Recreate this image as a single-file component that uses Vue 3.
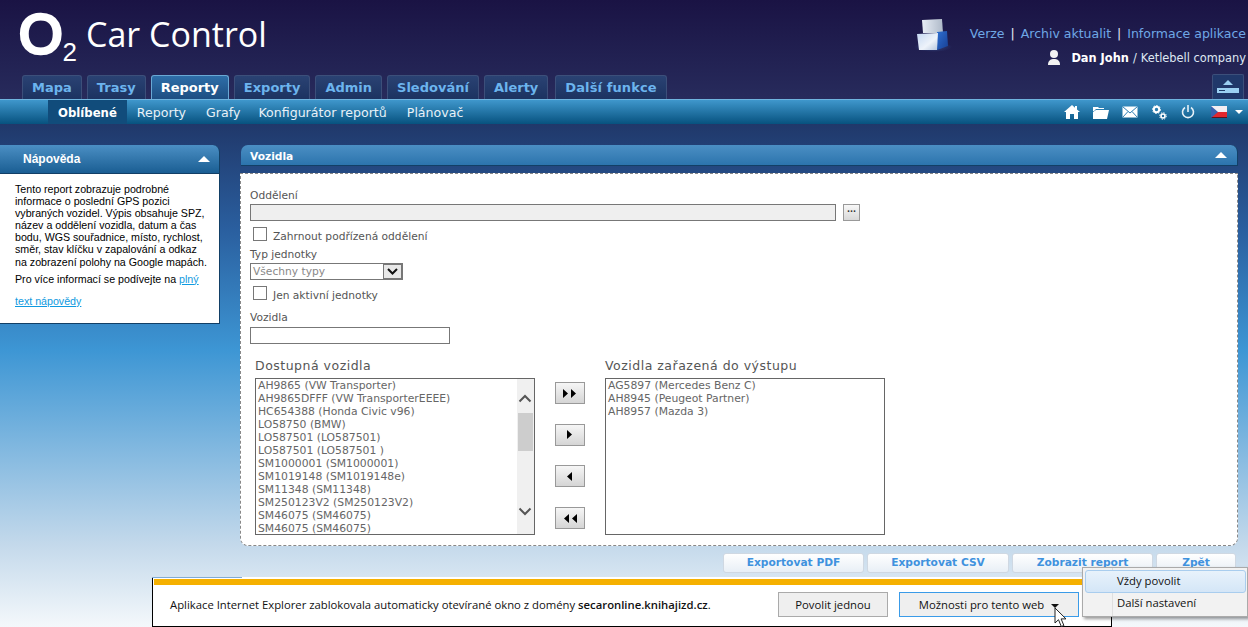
<script setup>
const tabs = ['Mapa', 'Trasy', 'Reporty', 'Exporty', 'Admin', 'Sledování', 'Alerty', 'Další funkce']
const subs = ['Oblíbené', 'Reporty', 'Grafy', 'Konfigurátor reportů', 'Plánovač']
const avail = ['AH9865 (VW Transporter)', 'AH9865DFFF (VW TransporterEEEE)', 'HC654388 (Honda Civic v96)', 'LO58750 (BMW)', 'LO587501 (LO587501)', 'LO587501 (LO587501 )', 'SM1000001 (SM1000001)', 'SM1019148 (SM1019148e)', 'SM11348 (SM11348)', 'SM250123V2 (SM250123V2)', 'SM46075 (SM46075)', 'SM46075 (SM46075)']
const chosen = ['AG5897 (Mercedes Benz C)', 'AH8945 (Peugeot Partner)', 'AH8957 (Mazda 3)']
const exportsList = ['Exportovat PDF', 'Exportovat CSV', 'Zobrazit report', 'Zpět']
</script>

<template>
  <div class="page">
    <div class="topline"></div>
    <header class="head">
      <div class="brand">
        <span class="o">O</span><span class="two">2</span>
        <span class="title">Car Control</span>
      </div>
      <div class="headright">
        <svg class="cubes" width="38" height="38" viewBox="0 0 38 38">
          <defs>
            <linearGradient id="cubeA" x1="0" x2="1" y1="0" y2="0"><stop offset="0" stop-color="#e8eef6"/><stop offset="1" stop-color="#aeb9c8"/></linearGradient>
            <linearGradient id="cubeB" x1="0" x2="1" y1="0" y2="1"><stop offset="0" stop-color="#c4d8f2"/><stop offset=".6" stop-color="#eef3fa"/><stop offset="1" stop-color="#b5c6dd"/></linearGradient>
            <linearGradient id="cubeC" x1="0" x2="1" y1="0" y2="1"><stop offset="0" stop-color="#2f6fd0"/><stop offset="1" stop-color="#173f94"/></linearGradient>
            <radialGradient id="cubeS"><stop offset="0" stop-color="#3a5a9a" stop-opacity=".7"/><stop offset="1" stop-color="#3a5a9a" stop-opacity="0"/></radialGradient>
          </defs>
          <ellipse cx="18" cy="30" rx="19" ry="5" fill="url(#cubeS)"/>
          <path d="M7 3l20-1 1 14H8z" fill="url(#cubeA)"/>
          <path d="M22 15l10-1 1 15-11 4z" fill="url(#cubeC)"/>
          <path d="M2 17l21-1-1 17-18 0z" fill="url(#cubeB)"/>
        </svg>
        <div class="links">
          <a>Verze</a><i>|</i><a>Archiv aktualit</a><i>|</i><a>Informace aplikace</a>
        </div>
        <div class="user">
          <svg width="16" height="18" viewBox="0 0 16 18"><circle cx="8" cy="5" r="4" fill="#f2f2f2"/><path d="M2 16c0-5 3-6 6-6s6 1 6 6z" fill="#f2f2f2"/></svg>
          <b>Dan John</b><span class="sl">/</span><span>Ketlebell company</span>
        </div>
      </div>
      <nav class="tabs">
        <a v-for="(t, i) in tabs" :key="t" class="tab" :class="{ on: i === 2 }">{{ t }}</a>
        <span class="collapse">
          <svg width="24" height="16" viewBox="0 0 24 16"><path d="M7 6l5-5 5 5z" fill="#9bd0f2"/><rect x="1" y="9" width="22" height="5" fill="#9bd0f2"/><rect x="3" y="11" width="6" height="1" fill="#1d3a66"/></svg>
        </span>
      </nav>
    </header>

    <div class="subnav">
      <a v-for="(s, i) in subs" :key="s" class="sub" :class="{ on: i === 0 }">{{ s }}</a>
      <div class="icons">
        <svg width="16" height="14" viewBox="0 0 16 14"><path d="M8 0L0 7h2v7h4V9h4v5h4V7h2l-3-2.600V1h-2v1.700z" fill="#fff"/></svg>
        <svg width="16" height="13" viewBox="0 0 16 13"><path d="M0 1h5l1 1h5v1H3L1 5H0zM3 4h13l-2 9H0V6z" fill="#fff"/></svg>
        <svg width="16" height="12" viewBox="0 0 16 12"><rect x=".5" y=".5" width="15" height="11" fill="#fff"/><path d="M.5.5L8 7l7.500-6.500M.5 11.500L6 5.500M15.500 11.500L10 5.500" stroke="#2f7fb5" fill="none"/></svg>
        <svg class="nudge" width="15" height="15" viewBox="0 0 15 15"><circle cx="4.500" cy="4.500" r="2.700" fill="none" stroke="#fff" stroke-width="2"/><circle cx="4.500" cy="4.500" r="4" fill="none" stroke="#fff" stroke-width="1" stroke-dasharray="1.500 1.500"/><circle cx="11" cy="11" r="2" fill="none" stroke="#fff" stroke-width="1.600"/><circle cx="11" cy="11" r="3.300" fill="none" stroke="#fff" stroke-width="1" stroke-dasharray="1.300 1.300"/></svg>
        <svg class="nudge" width="14" height="14" viewBox="0 0 14 14"><path d="M4 2.500a5.500 5.500 0 1 0 6 0" fill="none" stroke="#e6f1f8" stroke-width="1.600"/><path d="M7 0v7" stroke="#e6f1f8" stroke-width="1.600"/></svg>
        <span class="flag"><svg width="16" height="12" viewBox="0 0 16 12"><rect width="16" height="6" fill="#f4eef2"/><rect y="6" width="16" height="5" fill="#e3272e"/><rect y="11" width="16" height="1" fill="#5a1220"/><path d="M0 0l7 6-7 6z" fill="#3a62ae"/></svg><em></em></span>
      </div>
    </div>

    <main class="main">
      <aside class="help">
        <div class="helphead"><span>Nápověda</span><em class="up"></em></div>
        <div class="helpbody">
          <p>Tento report zobrazuje podrobné<br>informace o poslední GPS pozici<br>vybraných vozidel. Výpis obsahuje SPZ,<br>název a oddělení vozidla, datum a čas<br>bodu, WGS souřadnice, místo, rychlost,<br>směr, stav klíčku v zapalování a odkaz<br>na zobrazení polohy na Google mapách.</p>
          <p class="more">Pro více informací se podívejte na <a>plný</a></p>
          <p class="more2"><a>text nápovědy</a></p>
        </div>
      </aside>

      <section class="content">
        <div class="panelhead"><span>Vozidla</span><em class="up"></em></div>
        <div class="form">
          <label class="l1">Oddělení</label>
          <div class="deptrow"><div class="dept"></div><button class="dots">...</button></div>
          <div class="chk c1"><span class="box"></span>Zahrnout podřízená oddělení</div>
          <label class="l2">Typ jednotky</label>
          <div class="select"><span>Všechny typy</span><b><svg width="11" height="7" viewBox="0 0 11 7"><path d="M1 1l4.500 4.500L10 1" fill="none" stroke="#111" stroke-width="2"/></svg></b></div>
          <div class="chk c2"><span class="box"></span>Jen aktivní jednotky</div>
          <label class="l3">Vozidla</label>
          <div class="vinput"></div>
          <div class="pickers">
            <div class="col">
              <div class="cap">Dostupná vozidla</div>
              <div class="list">
                <div class="rows"><div v-for="(a, i) in avail" :key="i">{{ a }}</div></div>
                <div class="scroll">
                  <svg class="sa" width="14" height="9" viewBox="0 0 14 9"><path d="M1.500 7.500L7 2l5.500 5.500" fill="none" stroke="#555" stroke-width="2"/></svg>
                  <div class="thumb"></div>
                  <svg class="sb" width="14" height="9" viewBox="0 0 14 9"><path d="M1.500 1.500L7 7l5.500-5.500" fill="none" stroke="#555" stroke-width="2"/></svg>
                </div>
              </div>
            </div>
            <div class="mv">
              <button><svg width="16" height="9" viewBox="0 0 16 9"><path d="M1 0l5 4.500L1 9zM9 0l5 4.500L9 9z"/></svg></button>
              <button><svg width="16" height="9" viewBox="0 0 16 9"><path d="M5 0l5 4.500L5 9z"/></svg></button>
              <button><svg width="16" height="9" viewBox="0 0 16 9"><path d="M10 0L5 4.500 10 9z"/></svg></button>
              <button><svg width="16" height="9" viewBox="0 0 16 9"><path d="M7 0L2 4.500 7 9zM15 0l-5 4.500L15 9z"/></svg></button>
            </div>
            <div class="col">
              <div class="cap">Vozidla zařazená do výstupu</div>
              <div class="list"><div class="rows"><div v-for="c in chosen" :key="c">{{ c }}</div></div></div>
            </div>
          </div>
        </div>
        <div class="actions">
          <button v-for="e in exportsList" :key="e" class="act">{{ e }}</button>
        </div>
      </section>
    </main>

    <div class="bar">
      <div class="gold"></div>
      <div class="barrow">
        <span class="msg">Aplikace Internet Explorer zablokovala automaticky otevírané okno z domény <b>secaronline.knihajizd.cz</b>.</span>
        <button class="ie">Povolit jednou</button>
        <button class="ie focus">Možnosti pro tento web<em></em></button>
      </div>
    </div>
    <div class="menu">
      <div class="mi hot">Vždy povolit</div>
      <div class="mi">Další nastavení</div>
    </div>
    <svg class="cursor" width="14" height="21" viewBox="0 0 14 21"><path d="M1 1v15l3.500-3.300 2.800 6.800 2.600-1-2.800-6.600H12z" fill="#fff" stroke="#222" stroke-width="1"/></svg>
  </div>
</template>

<style>
html, body { margin: 0; background: #fff; }
</style>

<style scoped>
.page {
  position: relative;
  width: 1248px;
  height: 627px;
  overflow: hidden;
  font-family: "DejaVu Sans", sans-serif;
  background: linear-gradient(#20386a 124px, #2a5f9f 230px, #3d96d4 350px, #c4d9eb 545px, #f4f8fb 627px);
}
.topline { height: 1px; width: 274px; background: #7b7763; position: absolute; left: 0; top: 0; }
.head {
  height: 99px;
  position: relative;
  box-sizing: border-box;
  padding: 0 0 0 22px;
  background: linear-gradient(#1a1344, #272b5c);
  display: flex;
  flex-direction: column;
  justify-content: flex-end;
}
.brand {
  position: absolute;
  left: 19px;
  top: 2px;
  display: flex;
  color: #fff;
  font-family: "Open Sans", sans-serif;
  align-items: flex-start;
}
.o { font: 400 56px/63px "Liberation Sans", sans-serif; -webkit-text-stroke: 3.500px #fff; }
.two { font: 400 26px/26px "Liberation Sans", sans-serif; margin: 37px 0 0 0; }
.title { font-size: 34px; line-height: 46px; margin: 9px 0 0 9px; }
.headright {
  position: absolute;
  right: 2px;
  top: 17px;
  color: #fff;
  text-align: right;
  font-size: 12.500px;
}
.cubes { position: absolute; left: -55px; top: 0; }
.links { height: 20px; line-height: 33px; font-size: 12.500px; white-space: nowrap; color: #e8eef6; }
.links a { color: #6fa8e6; }
.links i { font-style: normal; margin: 0 6px; }
.user {
  margin-top: 13px;
  display: flex;
  justify-content: flex-end;
  align-items: center;
  font-size: 11.400px;
  height: 16px;
  white-space: nowrap;
  color: #dfe7f2;
}
.user svg { margin-right: 9px; }
.user b { color: #fff; }
.sl { margin: 0 4px; }
.tabs { display: flex; gap: 5px; height: 24px; align-items: flex-end; padding-right: 4px; }
.tab {
  box-sizing: border-box;
  height: 24px;
  padding: 0 9px;
  font-size: 13px;
  font-weight: 700;
  line-height: 24px;
  color: #6cb4ee;
  border: 1px solid #3c4f7a;
  border-bottom: 0;
  border-radius: 3px 3px 0 0;
  background: linear-gradient(#2a4273, #1c3361);
}
.tab:nth-child(8) { margin-left: 2px; letter-spacing: .1px; }
.tab.on { color: #fff; background: linear-gradient(#2e6ea8, #1d4e82); border-color: #6aa8d4; }
.collapse {
  box-sizing: border-box;
  margin-left: auto;
  width: 32px;
  height: 25px;
  background: #20386a;
  border: 1px solid #3c4f7a;
  border-bottom: 0;
  border-radius: 2px 2px 0 0;
  display: flex;
  align-items: center;
  justify-content: center;
}
.subnav {
  box-sizing: border-box;
  height: 25px;
  padding-left: 48px;
  display: flex;
  border-top: 1px solid #6fb4de;
  background: linear-gradient(#3f97cc, #07527f);
  color: #fff;
  font-size: 12.600px;
}
.sub { padding: 0 10px; white-space: nowrap; color: #e8f1f8; height: 24px; line-height: 26px; }
.sub:nth-child(3) { margin-right: -2px; }
.sub.on { color: #fff; font-weight: 700; font-size: 11.700px; background: #114c7b; }
.icons { margin-left: auto; display: flex; align-items: center; padding-right: 5px; gap: 13px; height: 24px; }
.nudge { margin-left: 1px; }
.flag { display: flex; align-items: center; gap: 8px; margin-left: 3px; }
.flag em { width: 0; height: 0; border: 4px solid transparent; border-top: 4px solid #fff; border-bottom: 0; }
.main { display: flex; align-items: flex-start; padding-top: 21px; }
.help { width: 220px; flex: none; }
.helphead {
  box-sizing: border-box;
  height: 29px;
  padding: 0 9px 0 23px;
  display: flex;
  align-items: center;
  justify-content: space-between;
  font: 700 12px "Liberation Sans", sans-serif;
  color: #fff;
  background: linear-gradient(#4b8fc4, #1a5e93);
  border-top-right-radius: 7px;
  border-bottom: 1px solid #123f66;
  border-right: 1px solid #123f66;
}
.up { display: block; width: 0; height: 0; border: 6px solid transparent; border-bottom: 6px solid #fff; border-top: 0; }
.helpbody {
  box-sizing: border-box;
  height: 150px;
  padding: 9px 0 0 15px;
  background: #fff;
  border-right: 1px solid #123f66;
  border-bottom: 1px solid #123f66;
  font: 10.670px/12.100px "Liberation Sans", sans-serif;
  color: #000;
  white-space: nowrap;
}
.helpbody p { margin: 0; }
.more { margin-top: 5px !important; }
.more2 { margin-top: 10px !important; }
.helpbody a { color: #0f9ae0; text-decoration: underline; }
.content { width: 998px; margin-left: 20px; }
.panelhead {
  box-sizing: border-box;
  height: 21px;
  margin-left: 1px;
  width: 997px;
  padding: 2px 10px 0 9px;
  display: flex;
  align-items: center;
  justify-content: space-between;
  color: #fff;
  font-size: 10.670px;
  font-weight: 700;
  background: linear-gradient(#4b8fc4, #2c74ad);
  border-radius: 7px 7px 0 0;
  border-bottom: 1px solid #123f66;
  border-right: 1px solid #123f66;
}
.panelhead .up { margin-top: -3px; }
.form {
  box-sizing: border-box;
  margin-top: 7px;
  height: 373px;
  padding: 14px 0 0 9px;
  background: #fff;
  border: 1px dashed #888;
  border-radius: 0 0 8px 8px;
  color: #555;
  font-size: 10.670px;
}
.form label { display: block; line-height: 15px; }
.deptrow { display: flex; margin-top: 1px; align-items: center; gap: 7px; }
.dept { box-sizing: border-box; width: 586px; height: 17px; background: #efefef; border: 1px solid #777; }
.dots { box-sizing: border-box; width: 17px; height: 17px; padding: 0 0 5px; font: 700 8px/10px "DejaVu Sans", sans-serif; color: #333; background: linear-gradient(#f8f8f8, #d8d8d8); border: 1px solid #999; }
.chk { display: flex; align-items: center; height: 18px; white-space: nowrap; }
.c1 { margin: 6px 0 0; }
.c2 { margin: 6px 0 0; }
.box { box-sizing: border-box; width: 14px; height: 14px; border: 1px solid #777; margin: -4px 6px 0 3px; background: #fff; }
.l2 { margin-top: 2px; }
.select {
  box-sizing: border-box;
  width: 153px;
  height: 17px;
  margin-top: 1px;
  border: 1px solid #777;
  display: flex;
  justify-content: space-between;
  line-height: 15px;
  color: #888;
  padding-left: 2px;
}
.select b { box-sizing: border-box; width: 19px; height: 15px; border: 1px solid #777; background: #e8e8e8; display: flex; align-items: center; justify-content: center; }
.l3 { margin-top: 6px; }
.vinput { box-sizing: border-box; width: 200px; height: 17px; border: 1px solid #777; margin-top: 2px; }
.pickers { display: flex; margin: 13px 0 0 5px; }
.cap { font-size: 12.500px; letter-spacing: .5px; height: 21px; line-height: 18px; white-space: nowrap; }
.list {
  box-sizing: border-box;
  width: 280px;
  height: 157px;
  border: 1px solid #666;
  display: flex;
  overflow: hidden;
  background: #fff;
  color: #666;
  font-size: 10.800px;
  line-height: 13px;
}
.rows { flex: 1; height: 155px; padding: 0 0 0 2px; white-space: nowrap; overflow: hidden; }
.scroll { width: 17px; flex: none; background: #f0f0f0; position: relative; }
.thumb { position: absolute; top: 34px; left: 1px; width: 15px; height: 38px; background: #cdcdcd; }
.sa { position: absolute; left: 1px; top: 15px; }
.sb { position: absolute; left: 1px; top: 128px; }
.mv { width: 70px; display: flex; flex-direction: column; align-items: center; padding-top: 25px; gap: 19.700px; }
.mv button { box-sizing: border-box; width: 30px; height: 22px; padding: 0; border: 1px solid #999; background: linear-gradient(#f6f6f6, #d5d5d5); display: flex; align-items: center; justify-content: center; }
.actions { display: flex; justify-content: flex-end; gap: 3px; margin: 7px 2px 0 0; }
.act {
  box-sizing: border-box;
  height: 20px;
  padding: 0 0 1px;
  width: 142px;
  font: 700 10.670px/18px "DejaVu Sans", sans-serif;
  color: #3f92de;
  background: linear-gradient(#fff, #e8eff6);
  border: 1px solid #cfd8e2;
  border-radius: 3px;
}
.act:nth-child(1) { width: 141px; }
.act:nth-child(3) { width: 141px; }
.act:nth-child(4) { width: 80px; }
.bar {
  position: absolute;
  left: 152px;
  top: 577px;
  box-sizing: border-box;
  width: 960px;
  height: 50px;
  background: #fff;
  border-bottom: 1px solid #000;
  border-right: 1px solid #000;
}
.bar::before { content: ""; position: absolute; left: 0; top: 0; width: 90px; height: 1px; background: #7fabd6; }
.bar::after { content: ""; position: absolute; left: 0; top: 1px; bottom: 0; width: 1px; background: #000; }
.gold { height: 6px; margin-left: 2px; background: #f5b000; position: relative; top: 2px; }
.barrow { display: flex; align-items: center; height: 41px; padding: 2px 0 0 18px; box-sizing: border-box; font: 11.300px "Open Sans", sans-serif; color: #111; }
.msg { flex: 1; white-space: nowrap; }
.msg b { font-weight: 600; }
.ie { box-sizing: border-box; height: 25px; padding: 0; width: 110px; margin-right: 11px; font: 11.300px "Open Sans", sans-serif; color: #111; background: #efefef; border: 1px solid #aaa; }
.ie.focus { width: 180px; margin-right: 32px; border-color: #3a9be8; }
.ie em { display: inline-block; margin: 0 0 1px 7px; width: 0; height: 0; border: 4px solid transparent; border-top: 4px solid #111; border-bottom: 0; }
.menu {
  position: absolute;
  left: 1082px;
  top: 567px;
  box-sizing: border-box;
  width: 166px;
  height: 50px;
  padding: 2px 1px 1px 2px;
  background: linear-gradient(90deg, #f2f2f2 29px, #dfdfdf 29px, #dfdfdf 30px, #f2f2f2 30px);
  border: 1px solid #aaa;
  box-shadow: 2px 2px 3px rgba(0,0,0,.4);
  font: 11.300px "Open Sans", sans-serif;
  color: #111;
}
.mi { box-sizing: border-box; height: 23px; line-height: 19px; padding-left: 32px; }
.mi.hot { background: linear-gradient(#e8f2fb, #d4e6f7); border: 1px solid #a9cdee; border-radius: 3px; padding-left: 31px; }
.cursor { position: absolute; left: 1054px; top: 607px; }
</style>
